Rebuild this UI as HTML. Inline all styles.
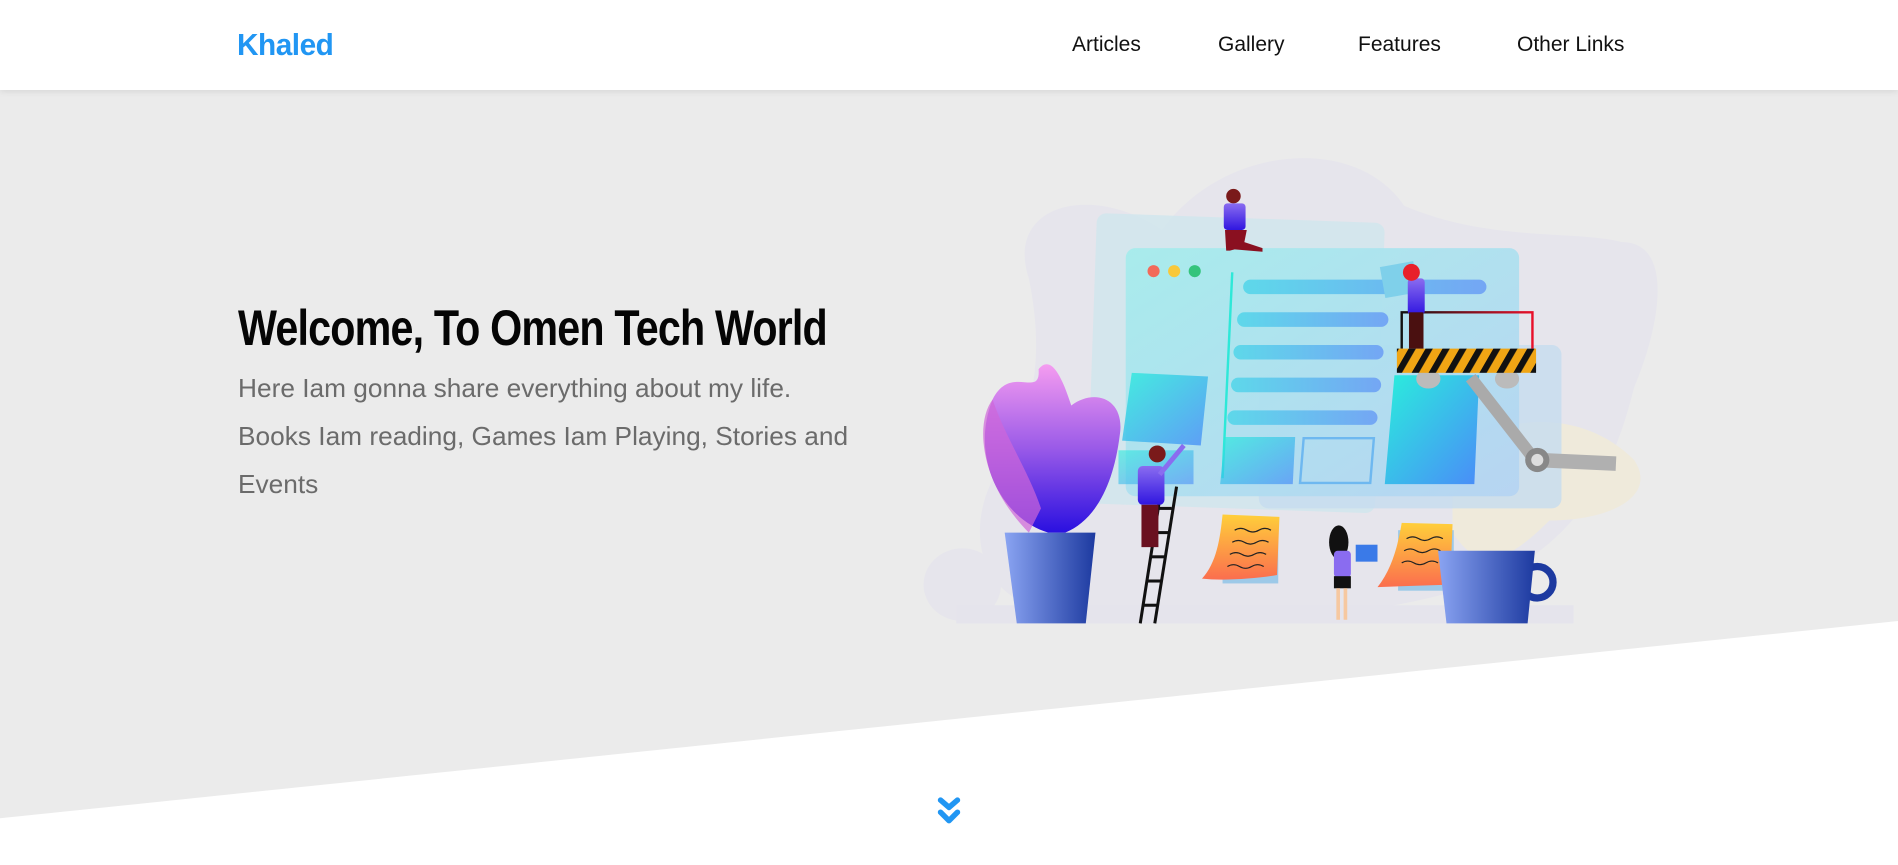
<!DOCTYPE html>
<html><head><meta charset="utf-8">
<style>
*{margin:0;padding:0;box-sizing:border-box}
html,body{width:1898px;height:865px;overflow:hidden;background:#fff;font-family:"Liberation Sans",sans-serif}
.nav{position:absolute;left:0;top:0;width:1898px;height:90px;background:#fff;box-shadow:0 2px 6px rgba(0,0,0,.08);z-index:3}
.logo{position:absolute;left:237px;top:27px;font-size:31px;font-weight:bold;color:#2196f3;transform:scaleX(.96);transform-origin:left;letter-spacing:-.5px}
.nav a{position:absolute;top:33px;font-size:21px;color:#111;text-decoration:none;transform:scaleX(1.0);transform-origin:left;white-space:nowrap}
h1{position:absolute;left:238px;top:299px;font-size:50px;font-weight:bold;color:#050505;transform:scaleX(.825);transform-origin:left;white-space:nowrap;letter-spacing:-1px}
.p{position:absolute;left:238px;font-size:26px;color:#6b6b6b;transform:scaleX(1.01);transform-origin:left;white-space:nowrap}
svg{position:absolute;left:0;top:0}
</style></head><body>
<svg width="1898" height="865" viewBox="0 0 1568 714.6">
<defs>
<linearGradient id="scr" x1="0" y1="0" x2="1" y2="1"><stop offset="0" stop-color="#a6ecec"/><stop offset="1" stop-color="#b6d4f2"/></linearGradient>
<linearGradient id="bar" x1="0" x2="1"><stop offset="0" stop-color="#5ed8ea"/><stop offset="1" stop-color="#74a6f4"/></linearGradient>
<linearGradient id="tile" x1="0" y1="0" x2="1" y2="1"><stop offset="0" stop-color="#2aeedc"/><stop offset="1" stop-color="#4a8cf8"/></linearGradient>
<linearGradient id="leaf" x1="0" y1="0" x2="0" y2="1"><stop offset="0" stop-color="#f59cf0"/><stop offset=".5" stop-color="#9a5ae8"/><stop offset="1" stop-color="#2a10e0"/></linearGradient>
<linearGradient id="pot" x1="0" x2="1"><stop offset="0" stop-color="#8aa4f2"/><stop offset="1" stop-color="#1d3aa0"/></linearGradient>
<linearGradient id="note" x1="0" y1="0" x2="0" y2="1"><stop offset="0" stop-color="#ffcf3a"/><stop offset="1" stop-color="#fb6e4e"/></linearGradient>
<linearGradient id="rail" x1="0" x2="1"><stop offset="0" stop-color="#111"/><stop offset="1" stop-color="#e8102a"/></linearGradient>
<linearGradient id="ppl" x1="0" y1="0" x2="0" y2="1"><stop offset="0" stop-color="#8a6cf0"/><stop offset="1" stop-color="#3016e0"/></linearGradient>
<pattern id="haz" width="14" height="20" patternUnits="userSpaceOnUse" patternTransform="skewX(-30)"><rect width="14" height="20" fill="#f0a514"/><rect width="6" height="20" fill="#111"/></pattern>
</defs>
<rect x="0" y="74" width="1568" height="641" fill="#ebebeb"/>
<polygon points="0,676 1568,513 1568,715 0,715" fill="#fff"/>
<path d="M850,230 C830,170 900,150 960,190 C1010,120 1120,110 1160,170 C1230,200 1300,190 1340,200 C1380,200 1375,260 1350,320 C1330,400 1300,440 1250,470 C1150,520 950,520 850,500 C800,480 800,420 830,380 C860,330 860,280 850,230Z" fill="#e6e5ec"/>
<ellipse cx="795" cy="483" rx="32" ry="30" fill="#e6e5ec"/>
<path d="M1200,370 C1250,340 1310,340 1350,380 C1370,410 1330,430 1280,430 C1240,470 1220,470 1200,440Z" fill="#efeadb"/>
<rect x="790" y="500" width="510" height="15" fill="#e5e4ec"/>
<rect x="902" y="180" width="238" height="240" rx="8" fill="#cfe6ee" opacity=".8" transform="rotate(2 1020 300)"/>
<rect x="1040" y="285" width="250" height="135" rx="8" fill="#c6dcef" opacity=".8"/>
<rect x="930" y="205" width="325" height="205" rx="8" fill="url(#scr)" opacity=".95"/>
<circle cx="953" cy="224" r="5" fill="#f26a5a"/><circle cx="970" cy="224" r="5" fill="#f8c83a"/><circle cx="987" cy="224" r="5" fill="#34c47c"/>
<line x1="1018" y1="225" x2="1010" y2="395" stroke="#2ee8d8" stroke-width="2"/>
<rect x="1027" y="231" width="201" height="12" rx="6" fill="url(#bar)"/>
<rect x="1022" y="258" width="125" height="12" rx="6" fill="url(#bar)"/>
<rect x="1019" y="285" width="124" height="12" rx="6" fill="url(#bar)"/>
<rect x="1017" y="312" width="124" height="12" rx="6" fill="url(#bar)"/>
<rect x="1014" y="339" width="124" height="12" rx="6" fill="url(#bar)"/>
<polygon points="935,308 998,311 992,368 927,364" fill="url(#tile)" opacity=".8"/>
<rect x="924" y="372" width="62" height="28" fill="url(#tile)" opacity=".6"/>
<polygon points="1012,361 1070,361 1068,400 1008,400" fill="url(#tile)" opacity=".7"/>
<polygon points="1077,362 1135,362 1132,399 1074,399" fill="none" stroke="#6eb8f0" stroke-width="2"/>
<polygon points="1152,310 1222,310 1218,400 1144,400" fill="url(#tile)"/>
<path d="M866,440 C830,430 800,380 820,330 C835,300 860,330 858,305 C870,290 880,320 885,335 C905,320 930,330 925,360 C920,400 905,430 880,440Z" fill="url(#leaf)"/>
<path d="M850,440 C810,400 805,350 820,330 C830,360 850,390 860,420Z" fill="#cf66d8" opacity=".7"/>
<polygon points="830,440 905,440 897,515 840,515" fill="url(#pot)"/>
<g stroke="#111" stroke-width="2.5"><line x1="960" y1="400" x2="942" y2="515"/><line x1="972" y1="402" x2="954" y2="515"/>
<line x1="956" y1="420" x2="968" y2="420"/><line x1="953" y1="440" x2="965" y2="440"/><line x1="950" y1="460" x2="962" y2="460"/><line x1="947" y1="480" x2="959" y2="480"/><line x1="944" y1="500" x2="956" y2="500"/></g>
<rect x="940" y="385" width="22" height="32" rx="4" fill="url(#ppl)"/><rect x="943" y="417" width="14" height="35" fill="#6a1020"/><circle cx="956" cy="375" r="7" fill="#7a1a1a"/><line x1="958" y1="392" x2="978" y2="368" stroke="#8a6cf0" stroke-width="4"/>
<rect x="1010" y="430" width="46" height="52" fill="#9dc9e8"/>
<path d="M1010,425 L1057,427 L1055,475 C1040,478 1010,480 993,478 C1005,465 1008,445 1010,425Z" fill="url(#note)"/>
<rect x="1155" y="438" width="46" height="50" fill="#9dc9e8"/>
<path d="M1158,432 L1200,433 L1198,483 L1138,485 C1150,470 1155,450 1158,432Z" fill="url(#note)"/>
<g stroke="#222" stroke-width="1" fill="none"><path d="M1020,438 q5,-3 10,0 t10,0 t10,0"/><path d="M1018,448 q5,-3 10,0 t10,0 t10,0"/><path d="M1016,458 q5,-3 10,0 t10,0 t10,0"/><path d="M1014,468 q5,-3 10,0 t10,0 t10,0"/><path d="M1162,445 q5,-3 10,0 t10,0 t10,0"/><path d="M1160,455 q5,-3 10,0 t10,0 t10,0"/><path d="M1158,465 q5,-3 10,0 t10,0 t10,0"/></g>
<ellipse cx="1106" cy="448" rx="8" ry="14" fill="#111"/><rect x="1102" y="455" width="14" height="22" rx="3" fill="#8a6cf0"/><rect x="1102" y="476" width="14" height="10" fill="#111"/><rect x="1104" y="486" width="3" height="26" fill="#f6c8a0"/><rect x="1110" y="486" width="3" height="26" fill="#f6c8a0"/><rect x="1120" y="450" width="18" height="14" fill="#3a7ae8"/>
<circle cx="1270" cy="481" r="13" fill="none" stroke="#1d3aa0" stroke-width="6"/>
<polygon points="1188,455 1268,455 1262,515 1195,515" fill="url(#pot)"/>
<line x1="1215" y1="312" x2="1268" y2="380" stroke="#aaa" stroke-width="10"/>
<line x1="1270" y1="380" x2="1335" y2="383" stroke="#b0b0b0" stroke-width="12"/>
<circle cx="1270" cy="380" r="10" fill="#888"/><circle cx="1270" cy="380" r="5" fill="#ddd"/>
<ellipse cx="1180" cy="313" rx="10" ry="8" fill="#bbb"/><ellipse cx="1245" cy="313" rx="10" ry="8" fill="#bbb"/>
<g stroke="url(#rail)" stroke-width="2" fill="none"><path d="M1158,288 V258 H1266 V288"/><line x1="1172" y1="258" x2="1172" y2="288"/><line x1="1186" y1="258" x2="1186" y2="288"/><line x1="1200" y1="258" x2="1200" y2="288"/><line x1="1215" y1="258" x2="1215" y2="288"/><line x1="1230" y1="258" x2="1230" y2="288"/><line x1="1245" y1="258" x2="1245" y2="288"/></g>
<rect x="1154" y="288" width="115" height="20" fill="url(#haz)"/>
<rect x="1142" y="218" width="28" height="26" fill="#7fd0ea" transform="rotate(-10 1156 231)"/>
<rect x="1163" y="230" width="14" height="30" rx="3" fill="url(#ppl)"/><rect x="1164" y="258" width="12" height="30" fill="#4a1010"/><circle cx="1166" cy="225" r="7" fill="#e8202a"/>
<circle cx="1019" cy="162" r="6" fill="#7a1a1a"/><rect x="1011" y="168" width="18" height="22" rx="3" fill="url(#ppl)"/><path d="M1012,190 L1030,190 L1028,200 L1043,205 L1043,208 L1020,206 L1016,207 L1013,207Z" fill="#8a1020"/>
<g fill="none" stroke="#2196f3" stroke-width="4.5" stroke-linecap="round" stroke-linejoin="round"><polyline points="777,661 784,667 791,661"/><polyline points="777,671 784,678 791,671"/></g>
</svg>
<div class="nav">
<div class="logo">Khaled</div>
<a style="left:1072px">Articles</a>
<a style="left:1218px">Gallery</a>
<a style="left:1358px">Features</a>
<a style="left:1517px">Other Links</a>
</div>
<h1>Welcome, To Omen Tech World</h1>
<div class="p" style="top:373px">Here Iam gonna share everything about my life.</div>
<div class="p" style="top:421px">Books Iam reading, Games Iam Playing, Stories and</div>
<div class="p" style="top:469px">Events</div>
</body></html>
